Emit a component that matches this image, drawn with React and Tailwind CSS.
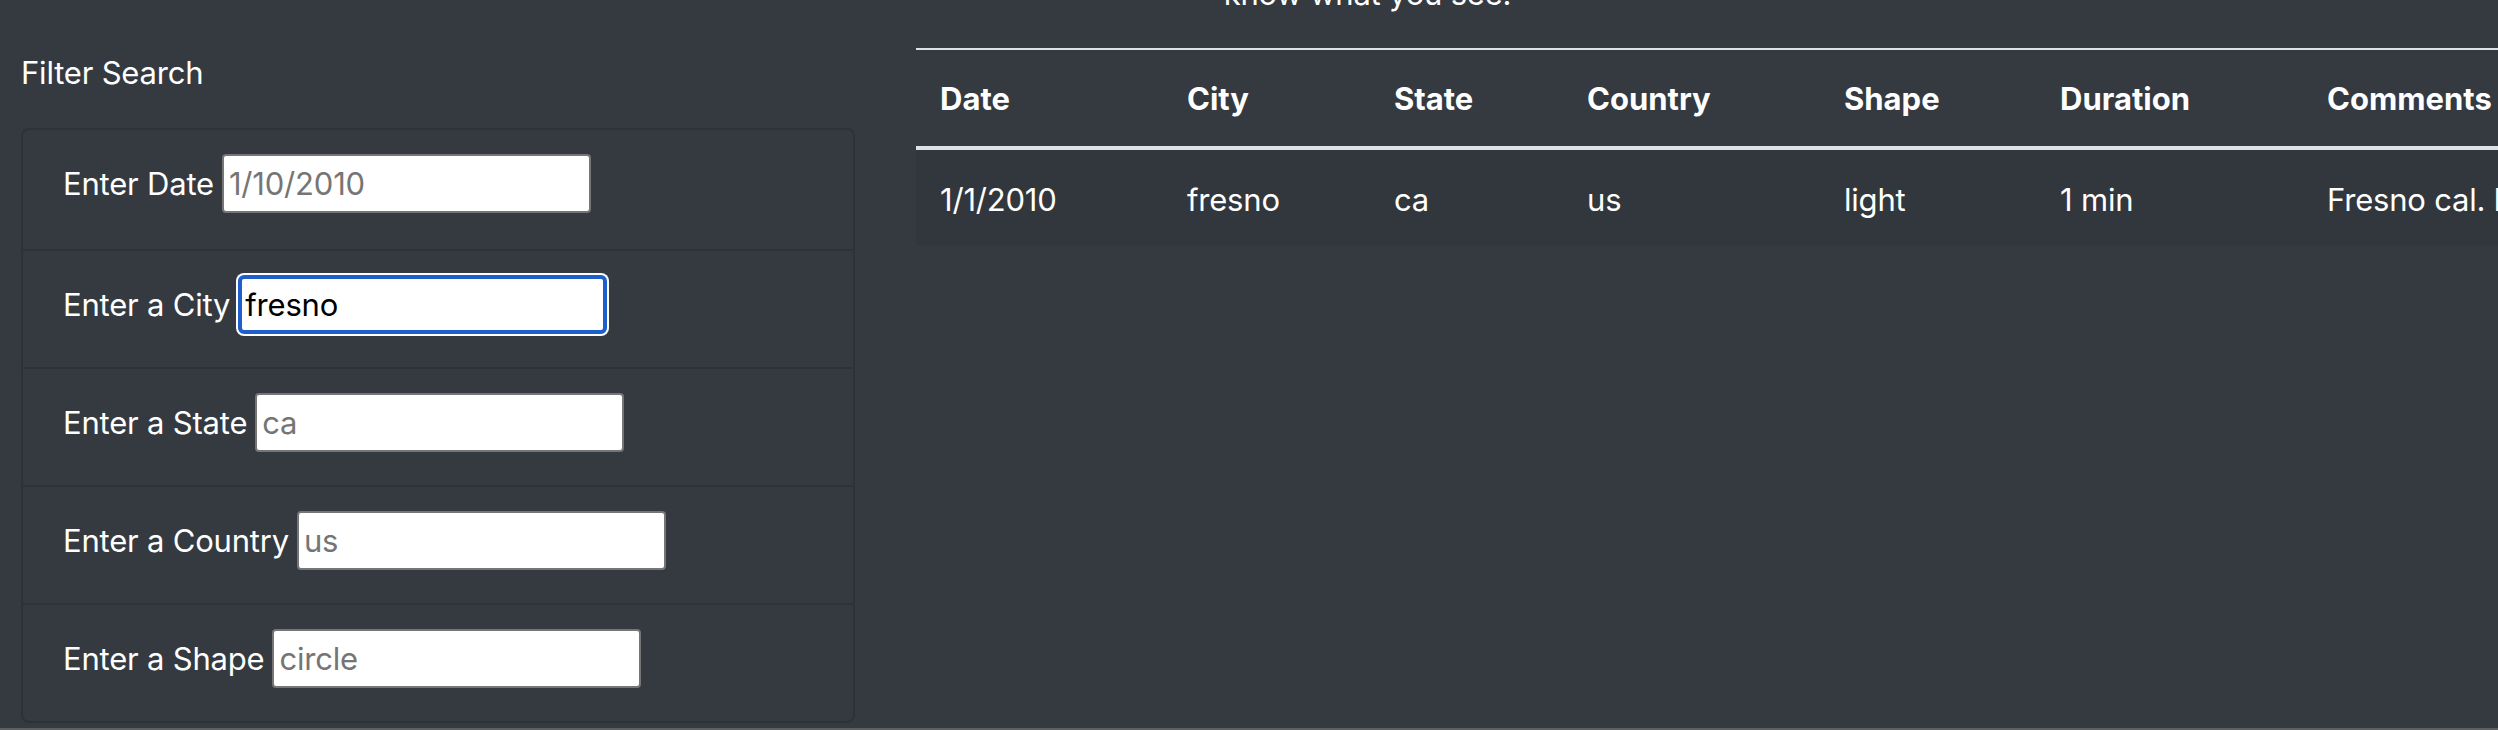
import React from 'react';

const filters = [
  { label: 'Enter Date', placeholder: '1/10/2010' },
  { label: 'Enter a City', value: 'fresno', focused: true },
  { label: 'Enter a State', placeholder: 'ca' },
  { label: 'Enter a Country', placeholder: 'us' },
  { label: 'Enter a Shape', placeholder: 'circle' },
];

const columns = [
  { name: 'Date', width: 'w-[247px]' },
  { name: 'City', width: 'w-[207px]' },
  { name: 'State', width: 'w-[193px]' },
  { name: 'Country', width: 'w-[257px]' },
  { name: 'Shape', width: 'w-[216px]' },
  { name: 'Duration', width: 'w-[267px]' },
  { name: 'Comments', width: 'w-[700px]' },
];

const sightings = [
  {
    id: 1,
    datetime: '1/1/2010',
    city: 'fresno',
    state: 'ca',
    country: 'us',
    shape: 'light',
    duration: '1 min',
    comments: 'Fresno cal. lights in the sky moving slowly',
  },
];

const App = () => {
  return (
    <div className="flex h-[730px] w-[2498px] flex-col overflow-hidden bg-[#343a40] font-['Inter','Liberation_Sans',sans-serif] text-[31px] text-white">
      <div className="flex h-[728px] overflow-hidden">
        {/* Filters */}
        <aside className="w-[886px] shrink-0 pl-[21px] pr-[31px]">
          <h5 className="mt-[54px] text-[31px] font-normal leading-[38px] tracking-[-0.2px]">Filter Search</h5>
          <ul className="mt-[36px] rounded-[8px] border-2 border-[#2d3237]">
            {filters.map((f, i) => (
              <li
                key={f.label}
                className={`px-[40px] pt-[24px] ${i === 0 ? 'h-[119px]' : 'h-[118px] border-t-2 border-[#2d3237]'}`}
              >
                <div className="flex h-[59px] items-center gap-[8px]">
                  <label className="leading-[38px] tracking-[-0.2px]">{f.label}</label>
                  {f.focused ? (
                    <input
                      type="text"
                      defaultValue={f.value}
                      className="h-[59px] w-[369px] rounded-[6px] border-[4px] border-[#1f5fcc] bg-white px-[3px] text-[31px] tracking-[-0.2px] text-black shadow-[0_0_0_2px_#ffffff] outline-none"
                    />
                  ) : (
                    <input
                      type="text"
                      placeholder={f.placeholder}
                      className="h-[59px] w-[369px] rounded-[4px] border-2 border-[#767676] bg-white px-[5px] text-[31px] tracking-[-0.2px] text-black outline-none placeholder:text-[#757575]"
                    />
                  )}
                </div>
              </li>
            ))}
          </ul>
        </aside>

        {/* Results */}
        <main className="min-w-0 flex-1 pl-[30px]">
          <p className="-mt-[30px] h-[48px] w-[903px] text-center leading-[48px] tracking-[-0.2px]">
            know what you see.
          </p>
          <table className="mt-[30px] w-[2087px] table-fixed border-collapse text-left">
            <thead>
              <tr>
                {columns.map((c) => (
                  <th
                    key={c.name}
                    className={`${c.width} border-t-2 border-b-4 border-[#dee2e6] px-[24px] pt-[25px] pb-[23px] font-bold leading-[48px]`}
                  >
                    {c.name}
                  </th>
                ))}
              </tr>
            </thead>
            <tbody>
              {sightings.map((s) => (
                <tr key={s.id} className="bg-[#31373d] tracking-[-0.2px]">
                  <td className="px-[24px] pt-[26px] pb-[22px] leading-[48px]">{s.datetime}</td>
                  <td className="px-[24px] pt-[26px] pb-[22px] leading-[48px]">{s.city}</td>
                  <td className="px-[24px] pt-[26px] pb-[22px] leading-[48px]">{s.state}</td>
                  <td className="px-[24px] pt-[26px] pb-[22px] leading-[48px]">{s.country}</td>
                  <td className="px-[24px] pt-[26px] pb-[22px] leading-[48px]">{s.shape}</td>
                  <td className="px-[24px] pt-[26px] pb-[22px] leading-[48px]">{s.duration}</td>
                  <td className="whitespace-nowrap px-[24px] pt-[26px] pb-[22px] leading-[48px]">{s.comments}</td>
                </tr>
              ))}
            </tbody>
          </table>
        </main>
      </div>
      <div className="h-[2px] bg-[#5d6063]" />
    </div>
  );
};

export default App;
